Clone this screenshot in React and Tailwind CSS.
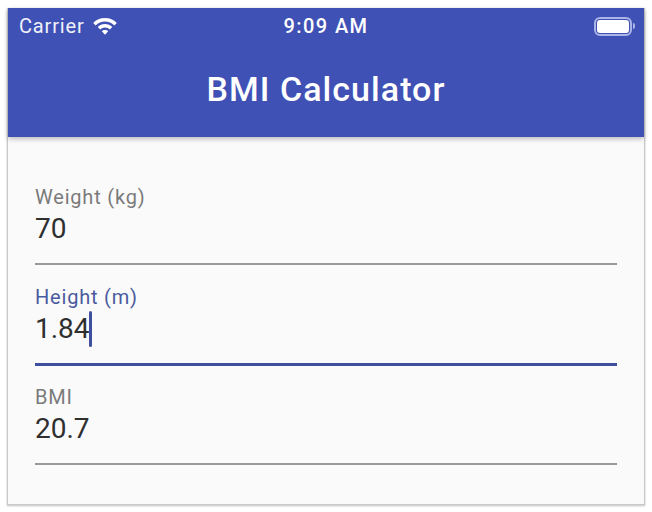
import React from 'react';

const Field = ({ label, value, focused }) => (
  <div className="h-[100px] flex flex-col">
    <p className={`text-[20px] leading-[22px] mt-[21px] tracking-[0.8px] ${focused ? 'text-[#4a5a9e]' : 'text-[#7a7a7a]'}`}>{label}</p>
    <div className="flex items-center h-[37px] mt-[2px] text-[28px] leading-[37px] text-[#2f2f2f]">
      <span>{value}</span>
      {focused && <span className="w-[3px] h-[36px] -ml-[1px] bg-[#3f4f9f] rounded-sm shrink-0" />}
    </div>
    <div className="mt-auto">
      <div className={focused ? 'h-[3px] -mb-[1px] bg-[#3f4f9f]' : 'h-[2px] mt-[1px] bg-[#9a9a9a]'} />
    </div>
  </div>
);

export default function App() {
  return (
    <div className="w-[652px] h-[512px] bg-white pt-[8px] pl-[7px] font-['Roboto',sans-serif]">
      <div className="w-[638px] h-[497px] bg-[#fafafa] border-x border-b border-[#c9c9c9] shadow-[0_1px_2px_rgba(0,0,0,0.25)] flex flex-col">
        <header className="h-[129px] bg-[#3f51b5] text-white shadow-[0_2px_5px_rgba(0,0,0,0.25)] flex flex-col shrink-0">
          <div className="h-[36px] relative flex items-center justify-between pl-[11px] pr-[9px]">
            <div className="flex items-center gap-[7px]">
              <span className="text-[20px] leading-[24px] tracking-[0.85px] text-[#f0f1fa]">Carrier</span>
              <svg width="26" height="20" viewBox="0 0 26 20" fill="white">
                <path d="M13 2C8.300 2 4.200 3.900 1.200 6.900l2.500 2.600C6.100 7.100 9.400 5.600 13 5.600s6.900 1.500 9.300 3.900l2.500-2.600C21.800 3.900 17.700 2 13 2z" />
                <path d="M13 8c-2.900 0-5.400 1.100-7.300 3l2.500 2.600c1.200-1.200 2.900-2 4.800-2s3.600.8 4.800 2l2.500-2.600C18.400 9.100 15.900 8 13 8z" />
                <path d="M13 14c-1.300 0-2.400.5-3.200 1.300L13 18.800l3.200-3.500C15.400 14.500 14.300 14 13 14z" />
              </svg>
            </div>
            <span className="absolute left-0 right-0 text-center text-[20px] leading-[24px] font-medium tracking-[1.4px]">9:09 AM</span>
            <div className="flex items-center gap-[1px]">
              <div className="w-[38px] h-[19px] rounded-[6px] border-2 border-[#aab4e6] p-[1px]">
                <div className="w-full h-full bg-white rounded-[3px]" />
              </div>
              <div className="w-[2px] h-[6px] bg-[#aab4e6] rounded-r-sm" />
            </div>
          </div>
          <div className="flex-1 flex items-center justify-center pb-[4px]">
            <h1 className="text-[34px] leading-[40px] font-medium tracking-[1.05px]">BMI Calculator</h1>
          </div>
        </header>
        <main className="px-[27px] pt-[28px]">
          <Field label="Weight (kg)" value="70" />
          <Field label="Height (m)" value="1.84" focused />
          <Field label="BMI" value="20.7" />
        </main>
      </div>
    </div>
  );
}
